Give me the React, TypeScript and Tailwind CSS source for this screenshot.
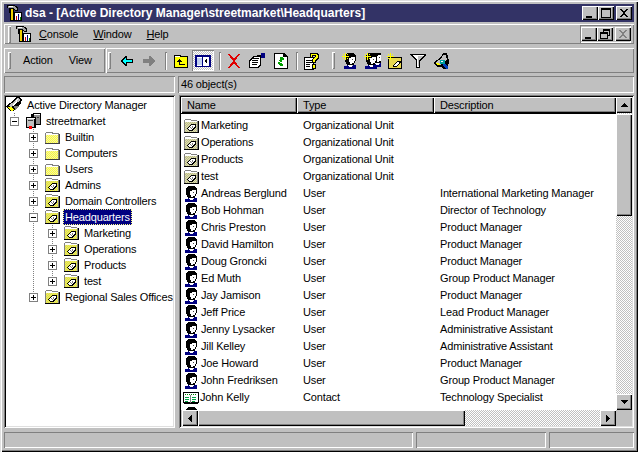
import type { ReactNode } from "react";

// Win2000 bevels
const RAISED = "shadow-[inset_1px_1px_0_#fff,inset_-1px_-1px_0_#808080]";
const BUTTON = "shadow-[inset_1px_1px_0_#fff,inset_-1px_-1px_0_#000,inset_-2px_-2px_0_#808080]";
const THIN_SUNKEN = "shadow-[inset_1px_1px_0_#808080,inset_-1px_-1px_0_#fff]";
const SUNKEN = "shadow-[inset_1px_1px_0_#808080,inset_-1px_-1px_0_#fff,inset_2px_2px_0_#000,inset_-2px_-2px_0_#dfdfdf]";
const DITHER = "bg-[repeating-conic-gradient(#c0c0c0_0_25%,#fff_0_50%)] [background-size:2px_2px]";

function Px({ className = "h-4 w-4", w = 16, h = 16, children }: { className?: string; w?: number; h?: number; children: ReactNode }) {
  return (
    <svg className={`block shrink-0 ${className}`} viewBox={`0 0 ${w} ${h}`} shapeRendering="crispEdges">
      {children}
    </svg>
  );
}

function Dots({ id, a, b }: { id: string; a: string; b: string }) {
  return (
    <defs>
      <pattern id={id} width="2" height="2" patternUnits="userSpaceOnUse">
        <path d="M0 0h2v2H0z" fill={a} />
        <path d="M0 0h1v1H0zM1 1h1v1H1z" fill={b} />
      </pattern>
    </defs>
  );
}

function AppIcon({ className }: { className?: string }) {
  return (
    <Px className={className}>
      <path d="M1 0h7l4 2v4H9L7 4H5v4H3V3H1z" fill="#000" />
      <path d="M2 1h6l3 2v2H9L7 3H2z" fill="#a0a0a0" />
      <path d="M3 1h4v1H3z" fill="#fff" />
      <path d="M4 4h4v12H4z" fill="#000" />
      <path d="M5 4h2v11H5z" fill="#f0d000" />
      <path d="M8 7h8v9H8z" fill="#000" />
      <path d="M9 8h6v7H9z" fill="#fff" />
      <path d="M10 11h1v4h-1z" fill="#d00000" />
      <path d="M12 9h1v6h-1z" fill="#000080" />
      <path d="M14 12h1v3h-1z" fill="#008000" />
    </Px>
  );
}

function Folder() {
  return (
    <Px>
      <Dots id="folder-fill" a="#ffff33" b="#f0f0b0" />
      <path d="M1 4l1-1h6l1 1h6v11H1z" fill="#808080" />
      <path d="M2 5h12v9H2z" fill="url(#folder-fill)" />
      <path d="M2 4h6v1H2zM2 5h12v1H2z" fill="#fff" />
      <path d="M1 14h15v1H1zM15 5h1v10h-1z" fill="#404040" />
    </Px>
  );
}

function OuFolder({ list }: { list?: boolean }) {
  const id = list ? "ou-list" : "ou-tree";
  return (
    <Px>
      <Dots id={id} a={list ? "#b8b890" : "#f0f020"} b={list ? "#e0e0a8" : "#d8d890"} />
      <path d="M1 2l1-1h5l1 1h6v1h1v12H1z" fill="#808080" />
      <path d="M2 2h5l1 1h6v1H2z" fill="#fff" />
      <path d="M2 4h12v10H2z" fill={`url(#${id})`} />
      <path d="M1 14h15v1H1zM15 3h1v12h-1z" fill="#000" />
      <path d="M4 10l4-4h4l1 1v2l-4 4H6l-2-2z" fill="#000" />
      <path d="M5 11l3-4h4v1l-3 4H6z" fill="#fff" />
      <path d="M7 9h1v1H7zM8 10h1V8h1v2H9v1H8z" fill="#808080" />
    </Px>
  );
}

function UserShape() {
  return (
    <>
      <path d="M5 0h6l2 1 1 2v4l-1 1v2h-1v2H8v1H5v-2H4V9H3V3l1-2z" fill="#000" />
      <path d="M7 5h1l1-1h3l1 1v2l-1 1v2h-2v1H8V9H7z" fill="#fff" />
      <path d="M10 6h1v1h-1z" fill="#404040" />
      <path d="M2 13h3v-1h1v1h5v-1h2l1 1v3H2z" fill="#000080" />
      <path d="M6 12h4v2H7z" fill="#fff" />
    </>
  );
}

function User() {
  return (
    <Px>
      <UserShape />
    </Px>
  );
}

function Contact() {
  return (
    <Px>
      <path d="M0 2h16v11h-1v1H1v-1H0z" fill="#000" />
      <path d="M1 3h14v9H1z" fill="#fff" />
      <path d="M2 4h1v1H2zM4 4h1v1H4zM6 4h1v1H6zM8 4h1v1H8zM10 4h1v1h-1zM12 4h1v1h-1z" fill="#008000" />
      <path d="M2 7h4v1H2zM9 7h4v1H9zM2 9h4v1H2zM9 9h4v1H9zM2 11h3v1H2zM9 11h3v1H9z" fill="#00a040" />
      <path d="M7 5h1v8H7z" fill="#808080" />
    </Px>
  );
}

function AdIcon() {
  return (
    <Px>
      <path d="M0 9l8-6 2-3h4l2 3-1 3-7 8H5l-4-3z" fill="#000" />
      <path d="M2 9l7-5 2-3h2l1 2-2 2-5 3-2 2z" fill="#c0c0c0" />
      <path d="M6 8l4-3 1-3h1l-1 3-4 4z" fill="#fff" />
      <path d="M2 10h3l3 2-2 2H5z" fill="#ffff00" />
      <path d="M8 9h5l-1 2-3 2z" fill="#808080" />
    </Px>
  );
}

function Servers() {
  return (
    <Px>
      <path d="M6 1h2V0h8v12h-5v3H1V4h5z" fill="#000" />
      <path d="M2 5h7v9H2z" fill="#c0c0c0" />
      <path d="M9 1h6v10h-4V4H9z" fill="#909090" />
      <path d="M2 5h8v1H2zM9 1h6v1H9z" fill="#fff" />
      <path d="M3 7h5v1H3zM12 4h2v1h-2z" fill="#404040" />
      <path d="M4 13h3v3H4z" fill="#ff0000" />
    </Px>
  );
}

function Expander({ open }: { open?: boolean }) {
  return (
    <Px className="h-[9px] w-[9px]" w={9} h={9}>
      <path d="M0 0h9v9H0z" fill="#808080" />
      <path d="M1 1h7v7H1z" fill="#fff" />
      <path d="M2 4h5v1H2z" fill="#000" />
      {!open && <path d="M4 2h1v5H4z" fill="#000" />}
    </Px>
  );
}

type TreeNode = { label: string; level: number; icon: "ad" | "server" | "folder" | "ou"; open?: boolean; selected?: boolean };

const TREE: TreeNode[] = [
  { label: "Active Directory Manager", level: 0, icon: "ad" },
  { label: "streetmarket", level: 1, icon: "server", open: true },
  { label: "Builtin", level: 2, icon: "folder" },
  { label: "Computers", level: 2, icon: "folder" },
  { label: "Users", level: 2, icon: "folder" },
  { label: "Admins", level: 2, icon: "ou" },
  { label: "Domain Controllers", level: 2, icon: "ou" },
  { label: "Headquarters", level: 2, icon: "ou", open: true, selected: true },
  { label: "Marketing", level: 3, icon: "ou" },
  { label: "Operations", level: 3, icon: "ou" },
  { label: "Products", level: 3, icon: "ou" },
  { label: "test", level: 3, icon: "ou" },
  { label: "Regional Sales Offices", level: 2, icon: "ou" },
];

const ROWS: [string, string, string][] = [
  ["Marketing", "Organizational Unit", ""],
  ["Operations", "Organizational Unit", ""],
  ["Products", "Organizational Unit", ""],
  ["test", "Organizational Unit", ""],
  ["Andreas Berglund", "User", "International Marketing Manager"],
  ["Bob Hohman", "User", "Director of Technology"],
  ["Chris Preston", "User", "Product Manager"],
  ["David Hamilton", "User", "Product Manager"],
  ["Doug Groncki", "User", "Product Manager"],
  ["Ed Muth", "User", "Group Product Manager"],
  ["Jay Jamison", "User", "Product Manager"],
  ["Jeff Price", "User", "Lead Product Manager"],
  ["Jenny Lysacker", "User", "Administrative Assistant"],
  ["Jill Kelley", "User", "Administrative Assistant"],
  ["Joe Howard", "User", "Product Manager"],
  ["John Fredriksen", "User", "Group Product Manager"],
  ["John Kelly", "Contact", "Technology Specialist"],
  ["Jonathan Dunn", "User", "Lead Product Manager"],
];

function TreeRow({ node }: { node: TreeNode }) {
  const margin = node.level === 3 ? "ml-[42px]" : node.level === 2 ? "ml-[23px]" : "ml-[4px]";
  return (
    <div className="relative flex h-4 items-center">
      {node.level === 0 ? (
        <AdIcon />
      ) : (
        <div className={`mr-[6px] ${margin}`}>
          <Expander open={node.open} />
        </div>
      )}
      {node.icon === "server" && <Servers />}
      {node.icon === "folder" && <Folder />}
      {node.icon === "ou" && <OuFolder />}
      <span
        className={`ml-[3px] h-4 whitespace-nowrap border border-transparent px-[1px] leading-[14px] ${
          node.selected ? "border-dotted !border-[#ffff80] bg-[#000080] text-white" : ""
        }`}
      >
        {node.label}
      </span>
    </div>
  );
}

function TreeLines() {
  // dotted connectors sit under the rows
  const dots = "M8 16v9M8 25h4M27 32v168M27 41h4M27 57h4M27 73h4M27 89h4M27 105h4M27 121h4M27 200h4M46 128v56M46 137h4M46 153h4M46 169h4M46 185h4";
  return (
    <svg className="absolute left-0 top-0 h-[220px] w-[80px]" viewBox="0 0 80 220" shapeRendering="crispEdges">
      <path d={dots} fill="none" stroke="#808080" strokeDasharray="1 1" />
    </svg>
  );
}

function Arrow({ dir }: { dir: "up" | "down" | "left" | "right" }) {
  if (dir === "up") return <Px className="h-[4px] w-[7px]" w={7} h={4}><path d="M3 0h1v1h1v1h1v1h1v1H0V3h1V2h1V1h1z" /></Px>;
  if (dir === "down") return <Px className="h-[4px] w-[7px]" w={7} h={4}><path d="M0 0h7v1H6v1H5v1H4v1H3V3H2V2H1V1H0z" /></Px>;
  if (dir === "left") return <Px className="h-[7px] w-[4px]" w={4} h={7}><path d="M3 0h1v7H3V6H2V5H1V4H0V3h1V2h1V1h1z" /></Px>;
  return <Px className="h-[7px] w-[4px]" w={4} h={7}><path d="M0 0h1v1h1v1h1v1h1v1H3v1H2v1H1v1H0z" /></Px>;
}

function ScrollButton({ dir, className }: { dir: "up" | "down" | "left" | "right"; className: string }) {
  return (
    <div className={`flex shrink-0 items-center justify-center bg-[#c0c0c0] ${BUTTON} ${className}`}>
      <Arrow dir={dir} />
    </div>
  );
}

function Grip({ className = "" }: { className?: string }) {
  return <div className={`h-[17px] w-[3px] shrink-0 ${RAISED} ${className}`} />;
}

function Sep({ className }: { className: string }) {
  return <div className={`h-[18px] w-[2px] shrink-0 ${THIN_SUNKEN} ${className}`} />;
}

function CaptionButton({ kind, className }: { kind: "min" | "max" | "close"; className?: string }) {
  return (
    <div className={`flex h-[14px] w-[16px] items-center justify-center bg-[#c0c0c0] ${BUTTON} ${className ?? ""}`}>
      <Px className="h-[10px] w-[10px]" w={10} h={10}>
        {kind === "min" && <path d="M1 8h6v2H1z" />}
        {kind === "max" && <path d="M0 0h10v10H0zM1 2v7h8V2z" fillRule="evenodd" />}
        {kind === "close" && <path d="M1 1h2v1h1v1h2V2h1V1h2v1H8v1H7v1H6v2h1v1h1v1h1v1H7V8H6V7H4v1H3v1H1V8h1V7h1V6h1V4H3V3H2V2H1z" />}
      </Px>
    </div>
  );
}

function MdiButton({ kind, className }: { kind: "min" | "restore" | "close"; className?: string }) {
  return (
    <div className={`flex h-[14px] w-[16px] items-center justify-center bg-[#c0c0c0] ${BUTTON} ${className ?? ""}`}>
      <Px className="h-[10px] w-[10px]" w={10} h={10}>
        {kind === "min" && <path d="M1 8h6v2H1z" />}
        {kind === "restore" && <path d="M3 0h7v7H8v3H0V3h3zM4 2v1h4v3h1V2zM1 5v4h6V5z" fillRule="evenodd" />}
        {kind === "close" && <path d="M1 1h2v1h1v1h2V2h1V1h2v1H8v1H7v1H6v2h1v1h1v1h1v1H7V8H6V7H4v1H3v1H1V8h1V7h1V6h1V4H3V3H2V2H1z" fill="#808080" />}
      </Px>
    </div>
  );
}

function Sparkle() {
  return <path d="M3 0h1v3h3v1H4v3H3V4H0V3h3zM1 1h1v1H1zM5 1h1v1H5zM1 5h1v1H1zM5 5h1v1H5z" fill="#ffff00" />;
}

function ListIcon({ type }: { type: string }) {
  if (type === "User") return <User />;
  if (type === "Contact") return <Contact />;
  return <OuFolder list />;
}

export default function App() {
  return (
    <div
      className="flex h-[452px] w-[638px] flex-col overflow-hidden bg-[#c0c0c0] px-[4px] pt-[4px] text-[11px] tracking-[-0.15px] text-black shadow-[inset_1px_1px_0_#dfdfdf,inset_2px_2px_0_#fff,inset_-1px_-1px_0_#000,inset_-2px_-2px_0_#808080]"
      style={{ fontFamily: '"Liberation Sans", Arial, sans-serif' }}
    >
      {/* title bar */}
      <div className="flex h-[18px] shrink-0 items-center bg-[#333366] pl-[2px] pr-[2px]">
        <AppIcon />
        <span className="ml-[3px] whitespace-nowrap text-[12px] font-bold tracking-normal text-white">
          {"dsa - [Active Directory Manager\\streetmarket\\Headquarters]"}
        </span>
        <div className="ml-auto flex items-center">
          <CaptionButton kind="min" />
          <CaptionButton kind="max" />
          <CaptionButton kind="close" className="ml-[2px]" />
        </div>
      </div>

      {/* menu band */}
      <div className={`mt-[2px] flex h-[20px] shrink-0 items-center pl-[4px] ${RAISED}`}>
        <Grip className="h-[14px]" />
        <AppIcon className="ml-[4px] h-4 w-4" />
        <div className="ml-[8px] flex gap-[15px]">
          <span><u>C</u>onsole</span>
          <span><u>W</u>indow</span>
          <span><u>H</u>elp</span>
        </div>
        <div className={`ml-auto mr-[3px] flex h-[18px] items-center pl-[1px] ${THIN_SUNKEN}`}>
          <MdiButton kind="min" />
          <MdiButton kind="restore" />
          <MdiButton kind="close" className="ml-[2px]" />
        </div>
      </div>

      {/* toolbars */}
      <div className="mt-[4px] flex h-[25px] shrink-0">
        <div className={`flex w-[101px] shrink-0 items-center pl-[4px] ${RAISED}`}>
          <Grip />
          <span className="ml-[12px]">Action</span>
          <span className="ml-[16px]">View</span>
        </div>
        <div className={`ml-[1px] flex flex-1 items-center pl-[2px] ${RAISED}`}>
          <Grip />
          <Px className="ml-[9px] h-[10px] w-[13px]" w={13} h={10}>
            <path d="M5 0h2v3h6v4H7v3H5V9H4V8H3V7H2V6H1V4h1V3h1V2h1V1h1z" fill="#000" />
            <path d="M5 2h1v2h6v2H6v2H5V7H4V6H3V4h1V3h1z" fill="#00ffff" />
          </Px>
          <Px className="ml-[10px] h-[10px] w-[13px]" w={13} h={10}>
            <path d="M6 0h2v1h1v1h1v1h1v1h1v2h-1v1h-1v1H9v1H8v1H6V7H0V3h6z" fill="#808080" />
          </Px>
          <Sep className="ml-[9px]" />
          <Px className="ml-[6px] h-[14px] w-4" w={16} h={14}>
            <path d="M1 1h6l1 1h7v12H1z" fill="#000" />
            <path d="M2 3h12v10H2z" fill="#ffff00" />
            <path d="M2 2h5v1H2z" fill="#fff" />
            <path d="M6 5h1v1h1v1h1v1H7v2h5v1H6V8H4V7h1V6h1z" fill="#000" />
          </Px>
          <div className={`ml-[3px] flex h-[21px] w-[22px] items-center justify-center ${DITHER} ${THIN_SUNKEN}`}>
            <Px className="h-[12px] w-4" w={16} h={12}>
              <path d="M0 0h16v12H0z" fill="#000080" />
              <path d="M2 2h5v9H2zM8 2h6v9H8z" fill="#fff" />
              <path d="M2 3h5v7H2z" fill="#c0d0f0" />
              <path d="M12 3v6l-3-3z" fill="#000" />
            </Px>
          </div>
          <Sep className="ml-[5px]" />
          <Px className="ml-[6px] h-[14px] w-[14px]" w={14} h={14}>
            <path d="M1 0h2l4 5 4-5h2l-5 7 5 7h-2L7 9l-4 5H1l5-7z" fill="#e00000" />
          </Px>
          <Px className="ml-[8px] h-4 w-4">
            <path d="M0 7l5-4h7v9l-2 3H0z" fill="#000" />
            <path d="M1 8l4-4h6v7l-2 3H1z" fill="#fff" />
            <path d="M3 7h6v1H3zM3 9h6v1H3zM3 11h5v1H3zM4 5h6v1H4z" fill="#000" />
            <path d="M8 2h4v1H8z" fill="#000" />
            <path d="M12 0h4v5h-4z" fill="#000080" />
          </Px>
          <Px className="ml-[9px] h-4 w-[14px]" w={14} h={16}>
            <path d="M0 0h10l4 3v13H0z" fill="#000" />
            <path d="M1 1h8v3h4v11H1z" fill="#fff" />
            <path d="M6 4h3v1h1v2H8v2H6V8H5V7h1zM4 9h2v1h2v1H9v2H6v-1H5v-1H4z" fill="#00a000" />
          </Px>
          <Sep className="ml-[8px]" />
          <Px className="ml-[6px] h-[18px] w-[15px]" w={15} h={18}>
            <path d="M0 5h10v13H0z" fill="#000" />
            <path d="M1 6h8v11H1z" fill="#fff" />
            <path d="M2 8h6v1H2zM2 10h6v1H2zM2 12h4v1H2zM2 14h4v1H2z" fill="#000" />
            <path d="M6 1h7l2 2v4l-3 2v2H8V7l3-2V4H9v2H6z" fill="#000" />
            <path d="M7 2h5l2 2v2l-3 2v2H9V7l3-2V3H8v2H7z" fill="#ffff00" />
            <path d="M8 12h4v5H8z" fill="#000" />
            <path d="M9 13h2v3H9z" fill="#ffff00" />
          </Px>
          <Grip className="ml-[13px]" />
          <Px className="ml-[7px] h-4 w-4">
            <UserShape />
            <Sparkle />
          </Px>
          <Px className="ml-[6px] h-4 w-[17px]" w={17} h={16}>
            <g transform="translate(5 -2)">
              <UserShape />
            </g>
            <g transform="translate(-1 0)">
              <UserShape />
            </g>
            <Sparkle />
          </Px>
          <Px className="ml-[6px] h-4 w-4">
            <path d="M1 4h14v12H1z" fill="#000" />
            <path d="M2 5h12v10H2z" fill="#e8d850" />
            <path d="M5 13l5-5h3l1 1-5 5H6z" fill="#000" />
            <path d="M6 13l4-4h2v1l-3 3z" fill="#fff" />
            <Sparkle />
          </Px>
          <Px className="ml-[7px] h-4 w-4">
            <path d="M0 1h16v1l-6 6v7H6V8L0 2z" fill="#000" />
            <path d="M2 2h12l-5 5v7H7V7z" fill="#fff" />
            <path d="M8 3h5l-4 4v6H8z" fill="#c0c0c0" />
          </Px>
          <Px className="ml-[7px] h-4 w-4">
            <path d="M0 10l8-6 2-4h4l1 3 1 6-2 7h-4L8 14H5z" fill="#000" />
            <path d="M2 10l7-5 1-3h3l1 5-7 5H5z" fill="#c0c0c0" />
            <path d="M2 10h3l2 2H5z" fill="#ffff00" />
            <path d="M7 7h5v4H7z" fill="#00a0a0" />
            <path d="M10 11h2l3 3v2h-2l-3-3z" fill="#0040c0" />
            <path d="M8 8h2v1H8z" fill="#fff" />
          </Px>
        </div>
      </div>

      {/* description strip */}
      <div className="mt-[3px] flex h-[17px] shrink-0 gap-[3px]">
        <div className={`w-[171px] ${THIN_SUNKEN}`} />
        <div className={`flex flex-1 items-center pl-[3px] ${THIN_SUNKEN}`}>46 object(s)</div>
      </div>

      {/* panes */}
      <div className="mt-[2px] flex h-[333px] shrink-0 gap-[4px]">
        <div className={`w-[171px] shrink-0 bg-white p-[2px] ${SUNKEN}`}>
          <div className="relative h-full overflow-hidden">
            <TreeLines />
            {TREE.map((node) => (
              <TreeRow key={node.label + node.level} node={node} />
            ))}
          </div>
        </div>

        <div className={`flex min-w-0 flex-1 flex-col bg-white p-[2px] ${SUNKEN}`}>
          <div className="flex h-[313px] shrink-0">
            <div className="flex w-[435px] flex-col overflow-hidden">
              <div className="flex h-[17px] shrink-0 border-b border-black bg-[#c0c0c0]">
                <div className={`flex w-[116px] items-center pl-[6px] ${BUTTON}`}>Name</div>
                <div className={`flex w-[137px] items-center pl-[6px] ${BUTTON}`}>Type</div>
                <div className={`flex flex-1 items-center pl-[6px] ${BUTTON}`}>Description</div>
              </div>
              <div className="min-h-0 flex-1 overflow-hidden pt-[3px]">
                {ROWS.map(([name, type, description]) => (
                  <div key={name + type} className="flex h-[17px] items-center whitespace-nowrap">
                    <div className="flex w-[116px] items-center pl-[2px]">
                      <ListIcon type={type} />
                      <span className={type === "Contact" ? "ml-[1px]" : "ml-[2px]"}>{name}</span>
                    </div>
                    <div className="w-[137px] pl-[6px]">{type}</div>
                    <div className="pl-[6px]">{description}</div>
                  </div>
                ))}
              </div>
            </div>
            <div className={`flex w-[16px] shrink-0 flex-col ${DITHER}`}>
              <ScrollButton dir="up" className="h-[16px]" />
              <div className={`mt-[1px] h-[102px] shrink-0 bg-[#c0c0c0] ${BUTTON}`} />
              <div className="flex-1" />
              <ScrollButton dir="down" className="h-[16px]" />
            </div>
          </div>
          <div className="flex h-[16px] shrink-0 bg-[#c0c0c0]">
            <div className={`ml-[1px] flex w-[434px] ${DITHER}`}>
              <ScrollButton dir="left" className="w-[16px]" />
              <div className={`w-[267px] shrink-0 bg-[#c0c0c0] ${BUTTON}`} />
              <div className="flex-1" />
              <ScrollButton dir="right" className="w-[16px]" />
            </div>
          </div>
        </div>
      </div>

      {/* status bar */}
      <div className="mt-[4px] flex h-[16px] shrink-0 gap-[3px]">
        <div className={`w-[409px] ${THIN_SUNKEN}`} />
        <div className={`w-[130px] ${THIN_SUNKEN}`} />
        <div className={`flex-1 ${THIN_SUNKEN}`} />
      </div>
    </div>
  );
}
